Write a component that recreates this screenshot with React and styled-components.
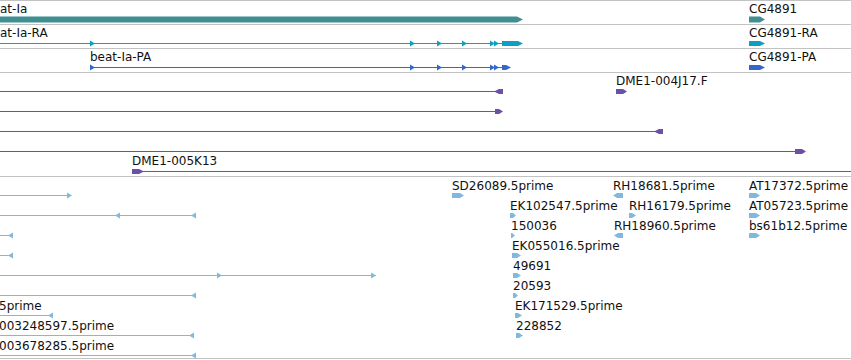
import React from 'react';
import styled, { createGlobalStyle } from 'styled-components';

const GlobalStyle = createGlobalStyle`
  html, body {
    margin: 0;
    padding: 0;
    background: #ffffff;
  }
  body {
    font-family: 'DejaVu Sans', Verdana, sans-serif;
  }
`;

const Browser = styled.div`
  width: 851px;
  display: flex;
  flex-direction: column;
  border-top: 1px solid #c2c2c2;
`;

const Track = styled.div`
  position: relative;
  height: ${(p) => p.$height}px;
  border-bottom: 1px solid #c2c2c2;
  overflow: hidden;
`;

const Glyphs = styled.svg`
  position: absolute;
  left: 0;
  top: 0;
  display: block;
`;

const Label = styled.div`
  position: absolute;
  left: ${(p) => p.$x}px;
  top: ${(p) => p.$y}px;
  font-size: 12px;
  line-height: 14px;
  color: #111111;
  white-space: nowrap;
`;

const TEAL = '#408f92';
const CYAN = '#0f9fc2';
const BLUE = '#3467cc';
const PURPLE = '#6c50a6';
const EST = '#80b9df';

// helpers for feature glyphs (page coordinates, shifted per track)
const line = (x1, x2, y) => ({ kind: 'line', x1, x2, y });
const block = (x1, x2, y, h, dir = 'r', taper = 5) => ({ kind: 'block', x1, x2, y, h, dir, taper });
const tri = (x, y, dir = 'r') => ({ kind: 'tri', x, y, dir });

const tracks = [
  {
    top: 1,
    height: 23,
    color: TEAL,
    labels: [
      { x: -15, y: 2, text: 'beat-Ia' },
      { x: 749, y: 2, text: 'CG4891' },
    ],
    shapes: [block(-10, 523, 19, 6, 'r', 6), block(749, 765, 19, 6, 'r', 5)],
  },
  {
    top: 25,
    height: 23,
    color: CYAN,
    labels: [
      { x: -15, y: 26, text: 'beat-Ia-RA' },
      { x: 749, y: 26, text: 'CG4891-RA' },
    ],
    shapes: [
      line(-5, 502, 43),
      tri(90, 43), tri(410, 43), tri(437, 43), tri(462, 43), tri(490, 43), tri(494, 43),
      block(502, 523, 43, 5, 'r', 5),
      block(749, 765, 43, 5, 'r', 5),
    ],
  },
  {
    top: 49,
    height: 23,
    color: BLUE,
    labels: [
      { x: 90, y: 50, text: 'beat-Ia-PA' },
      { x: 749, y: 50, text: 'CG4891-PA' },
    ],
    shapes: [
      line(90, 502, 67),
      tri(90, 67), tri(410, 67), tri(437, 67), tri(462, 67), tri(490, 67), tri(494, 67),
      block(502, 511, 67, 5, 'r', 5),
      block(749, 765, 67, 5, 'r', 5),
    ],
  },
  {
    top: 73,
    height: 103,
    color: PURPLE,
    labels: [
      { x: 616, y: 74, text: 'DME1-004J17.F' },
      { x: 132, y: 154, text: 'DME1-005K13' },
    ],
    shapes: [
      line(-5, 497, 91), block(494, 503, 91, 5, 'l', 5),
      block(616, 627, 91, 5, 'r', 4),
      line(-5, 497, 111), block(495, 503, 111, 5, 'r', 4),
      line(-5, 656, 131), block(654, 663, 131, 5, 'l', 5),
      line(-5, 797, 151), block(795, 806, 151, 5, 'r', 4),
      block(132, 144, 171, 5, 'r', 5), line(143, 860, 171),
    ],
  },
  {
    top: 177,
    height: 181,
    color: EST,
    labels: [
      { x: 452, y: 179, text: 'SD26089.5prime' },
      { x: 613, y: 179, text: 'RH18681.5prime' },
      { x: 749, y: 179, text: 'AT17372.5prime' },
      { x: 510, y: 199, text: 'EK102547.5prime' },
      { x: 629, y: 199, text: 'RH16179.5prime' },
      { x: 749, y: 199, text: 'AT05723.5prime' },
      { x: 511, y: 219, text: '150036' },
      { x: 614, y: 219, text: 'RH18960.5prime' },
      { x: 749, y: 219, text: 'bs61b12.5prime' },
      { x: 512, y: 239, text: 'EK055016.5prime' },
      { x: 513, y: 259, text: '49691' },
      { x: 513, y: 279, text: '20593' },
      { x: -1, y: 299, text: '5prime' },
      { x: 515, y: 299, text: 'EK171529.5prime' },
      { x: -1, y: 319, text: '003248597.5prime' },
      { x: 516, y: 319, text: '228852' },
      { x: -1, y: 339, text: '003678285.5prime' },
    ],
    shapes: [
      line(-5, 68, 195), tri(67, 195),
      block(452, 464, 195, 5, 'r', 4),
      block(613, 623, 195, 5, 'l', 4),
      block(749, 760, 195, 5, 'r', 4),

      line(-5, 196, 215), tri(115, 215, 'l'), tri(191, 215, 'l'),
      block(510, 516, 215, 5, 'r', 3),
      block(629, 636, 215, 5, 'r', 4),
      block(749, 760, 215, 5, 'r', 4),

      line(-5, 12, 235), tri(8, 235, 'l'),
      block(511, 515, 235, 5, 'r', 3),
      block(614, 623, 235, 5, 'l', 4),
      block(749, 760, 235, 5, 'r', 4),

      line(-5, 12, 255), tri(8, 255, 'l'),
      block(512, 521, 255, 5, 'r', 4),

      line(-5, 376, 275), tri(217, 275), tri(371, 275),
      block(513, 521, 275, 5, 'r', 4),

      line(-5, 196, 295), tri(191, 295, 'l'),
      block(513, 518, 295, 5, 'r', 3),

      line(-5, 53, 315), tri(48, 315, 'l'),
      block(515, 522, 315, 5, 'r', 4),

      line(-5, 194, 335), tri(189, 335, 'l'),
      block(516, 523, 335, 5, 'r', 4),

      line(-5, 196, 355), tri(191, 355, 'l'),
    ],
  },
];

const Shape = ({ s, top, color }) => {
  if (s.kind === 'line') {
    const y = s.y - top + 0.5;
    return <line x1={s.x1} x2={s.x2} y1={y} y2={y} stroke={color} strokeWidth="1" />;
  }
  if (s.kind === 'tri') {
    const y = s.y - top + 0.5;
    const pts =
      s.dir === 'r'
        ? `${s.x},${y - 3} ${s.x + 5},${y} ${s.x},${y + 3}`
        : `${s.x + 5},${y - 3} ${s.x},${y} ${s.x + 5},${y + 3}`;
    return <polygon points={pts} fill={color} />;
  }
  const cy = s.y - top + 0.5;
  const t0 = cy - s.h / 2;
  const b0 = cy + s.h / 2;
  const pts =
    s.dir === 'r'
      ? `${s.x1},${t0} ${s.x2 - s.taper},${t0} ${s.x2},${cy} ${s.x2 - s.taper},${b0} ${s.x1},${b0}`
      : `${s.x1 + s.taper},${t0} ${s.x2},${t0} ${s.x2},${b0} ${s.x1 + s.taper},${b0} ${s.x1},${cy}`;
  return <polygon points={pts} fill={color} />;
};

const App = () => {
  return (
    <>
      <GlobalStyle />
      <Browser>
        {tracks.map((tr, i) => (
          <Track key={i} $height={tr.height}>
            <Glyphs width="851" height={tr.height}>
              {tr.shapes.map((s, j) => (
                <Shape key={j} s={s} top={tr.top} color={tr.color} />
              ))}
            </Glyphs>
            {tr.labels.map((l, j) => (
              <Label key={j} $x={l.x} $y={l.y - tr.top}>
                {l.text}
              </Label>
            ))}
          </Track>
        ))}
      </Browser>
    </>
  );
};

export default App;
